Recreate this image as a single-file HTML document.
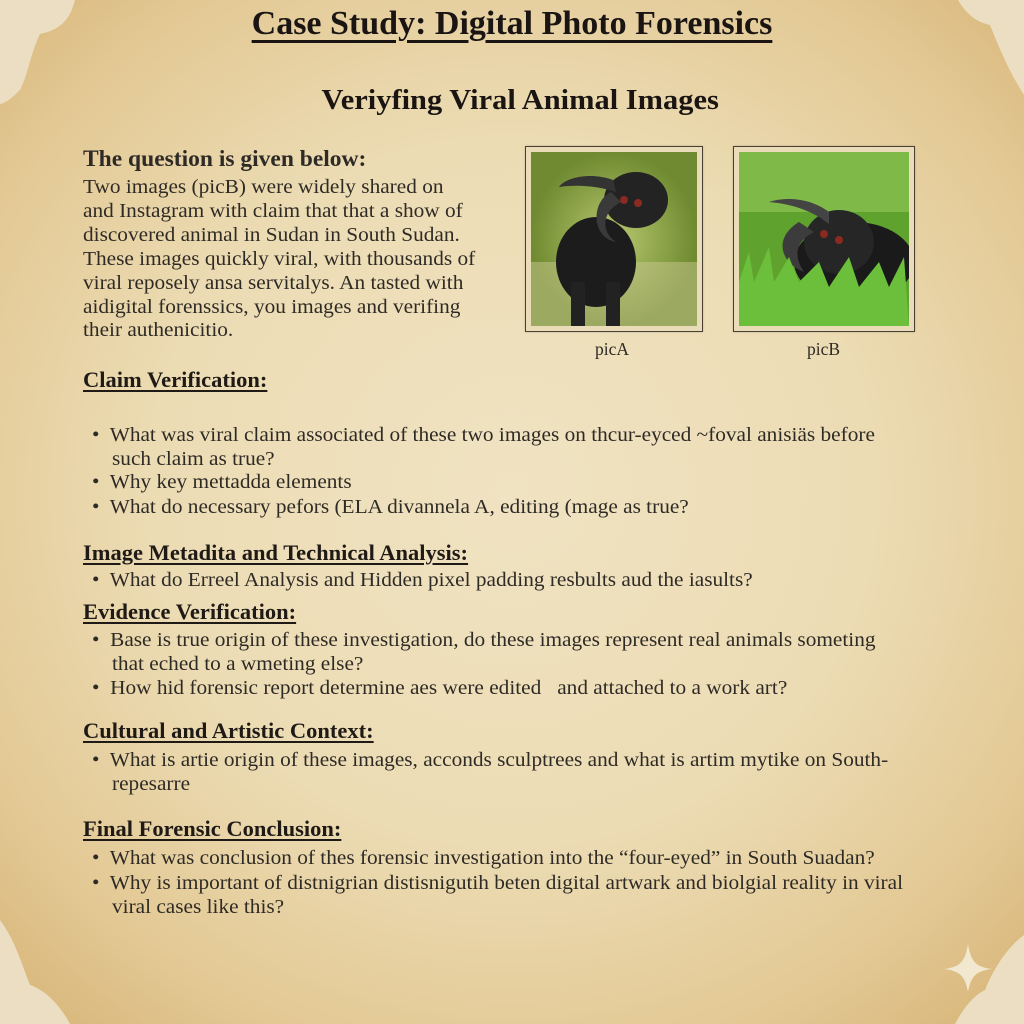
<!DOCTYPE html>
<html><head><meta charset="utf-8"><style>
html,body{margin:0;padding:0}
body{width:1024px;height:1024px;position:relative;overflow:hidden;font-family:"Liberation Serif",serif;color:#2e2a25;
background:radial-gradient(ellipse 70% 68% at 50% 48%,#f0e3c2 0%,#ecdcb4 50%,#e3c995 82%,#d9b87c 100%);}
.t{position:absolute;white-space:nowrap;font-size:20px;line-height:24px;transform-origin:0 0}
.p{transform:scaleX(1.065)}
.bl{transform:scaleX(1.065)}
.h{position:absolute;white-space:nowrap;font-weight:bold;font-size:22.5px;text-decoration:underline;text-decoration-thickness:1.5px;text-underline-offset:3px;color:#1f1a16}
.frame{position:absolute;border:1.5px solid #4a3f33;background:#eadcb8;box-shadow:0 0 2px rgba(0,0,0,.2)}
.frame svg{position:absolute;left:5px;top:5px}
</style></head><body>
<svg width="1024" height="1024" style="position:absolute;left:0;top:0">
<path d="M0 0 H75 C70 20 60 30 40 34 C30 55 28 75 20 90 C10 100 5 103 0 104Z" fill="#ebdec3"/>
<path d="M1024 0 H958 C965 12 975 22 990 25 C998 45 1008 70 1024 95Z" fill="#ebdec3"/>
<path d="M0 1024 H70 C60 1005 45 990 30 985 C22 965 15 940 0 920Z" fill="#ebdec3"/>
<path d="M1024 1024 H955 C965 1005 975 995 985 990 C995 965 1010 945 1024 935Z" fill="#ebdec3"/>
<path d="M968 944 C971 962 976 967 992 969 C976 971 971 976 968 992 C965 976 960 971 944 969 C960 967 965 962 968 944Z" fill="#f2e7cf"/>
</svg>
<div style="position:absolute;left:0;width:1024px;top:5px;text-align:center;font-size:34px;font-weight:bold;color:#1a1512"><span style="text-decoration:underline;text-decoration-thickness:3px;text-underline-offset:6px">Case Study: Digital Photo Forensics</span></div>
<div style="position:absolute;left:0;width:1040px;top:84px;text-align:center;font-size:29px;font-weight:bold;color:#1a1512"><span style="display:inline-block;transform:scaleX(1.05)">Veriyfing Viral Animal Images</span></div>
<div class="t" style="left:83px;top:147px;font-weight:bold;font-size:23.5px">The question is given below:</div>
<div class="t p" style="left:83px;top:175px">Two images (picB) were widely shared on</div>
<div class="t p" style="left:83px;top:199px">and Instagram with claim that that a show of</div>
<div class="t p" style="left:83px;top:223px">discovered animal in Sudan in South Sudan.</div>
<div class="t p" style="left:83px;top:247px">These images quickly viral, with thousands of</div>
<div class="t p" style="left:83px;top:271px">viral reposely ansa servitalys. An tasted with</div>
<div class="t p" style="left:83px;top:295px">aidigital forenssics, you images and verifing</div>
<div class="t p" style="left:83px;top:318px">their authenicitio.</div>

<div class="frame" style="left:525px;top:146px;width:176px;height:184px">
<svg width="166" height="174"><defs><radialGradient id="ga" cx="50%" cy="50%"><stop offset="0" stop-color="#b8c870"/><stop offset="1" stop-color="#6f8a30"/></radialGradient></defs>
<rect width="166" height="174" fill="url(#ga)"/><rect x="0" y="110" width="166" height="64" fill="#c9c890" opacity=".5"/>
<ellipse cx="65" cy="110" rx="40" ry="45" fill="#1c1c1c"/><rect x="40" y="130" width="14" height="44" fill="#222"/><rect x="75" y="130" width="14" height="44" fill="#222"/>
<ellipse cx="105" cy="48" rx="32" ry="28" fill="#232323"/><path d="M82 28 C60 20 35 25 28 35 C50 32 70 35 85 40Z" fill="#333"/><path d="M80 40 C60 50 60 85 85 90 C70 80 70 60 90 50Z" fill="#3a3a3a"/>
<circle cx="93" cy="48" r="4" fill="#8a2a20"/><circle cx="107" cy="51" r="4" fill="#8a2a20"/></svg></div>
<div class="frame" style="left:733px;top:146px;width:180px;height:184px">
<svg width="170" height="174"><rect width="170" height="174" fill="#5fa32e"/><rect y="0" width="170" height="60" fill="#7fba48"/>
<ellipse cx="115" cy="110" rx="60" ry="40" fill="#1a1a1a"/><ellipse cx="100" cy="90" rx="35" ry="32" fill="#262626"/>
<path d="M90 60 C70 45 45 45 30 50 C55 52 75 60 90 72Z" fill="#444"/><path d="M60 70 C35 85 40 110 65 120 C55 105 55 90 75 80Z" fill="#3c3c3c"/>
<circle cx="85" cy="82" r="4" fill="#8a2a20"/><circle cx="100" cy="88" r="4" fill="#8a2a20"/>
<path d="M0 130 L10 100 L15 130 L30 95 L35 130 L50 105 L60 130 L80 110 L90 135 L110 105 L120 135 L140 110 L150 135 L165 105 L170 174 L0 174Z" fill="#6cbf3a"/></svg></div>
<div class="t" style="left:595px;top:337px;font-size:17.5px">picA</div>
<div class="t" style="left:807px;top:337px;font-size:17.5px">picB</div>

<div class="h" style="left:83px;top:367px">Claim Verification:</div>
<div class="t bl" style="left:92px;top:423px">•&nbsp; What was viral claim associated of these two images on thcur-eyced ~foval anisiäs before</div>
<div class="t bl" style="left:112px;top:447px">such claim as true?</div>
<div class="t bl" style="left:92px;top:470px">•&nbsp; Why key mettadda elements</div>
<div class="t bl" style="left:92px;top:495px">•&nbsp; What do necessary pefors (ELA divannela A, editing (mage as true?</div>

<div class="h" style="left:83px;top:540px">Image Metadita and Technical Analysis:</div>
<div class="t bl" style="left:92px;top:568px">•&nbsp; What do Erreel Analysis and Hidden pixel padding resbults aud the iasults?</div>
<div class="h" style="left:83px;top:599px">Evidence Verification:</div>
<div class="t bl" style="left:92px;top:628px">•&nbsp; Base is true origin of these investigation, do these images represent real animals someting</div>
<div class="t bl" style="left:112px;top:652px">that eched to a wmeting else?</div>
<div class="t bl" style="left:92px;top:676px">•&nbsp; How hid forensic report determine aes were edited&nbsp;&nbsp; and attached to a work art?</div>

<div class="h" style="left:83px;top:718px">Cultural and Artistic Context:</div>
<div class="t bl" style="left:92px;top:748px">•&nbsp; What is artie origin of these images, acconds sculptrees and what is artim mytike on South-</div>
<div class="t bl" style="left:112px;top:772px">repesarre</div>

<div class="h" style="left:83px;top:816px">Final Forensic Conclusion:</div>
<div class="t bl" style="left:92px;top:846px">•&nbsp; What was conclusion of thes forensic investigation into the “four-eyed” in South Suadan?</div>
<div class="t bl" style="left:92px;top:871px">•&nbsp; Why is important of distnigrian distisnigutih beten digital artwark and biolgial reality in viral</div>
<div class="t bl" style="left:112px;top:895px">viral cases like this?</div>
</body></html>
